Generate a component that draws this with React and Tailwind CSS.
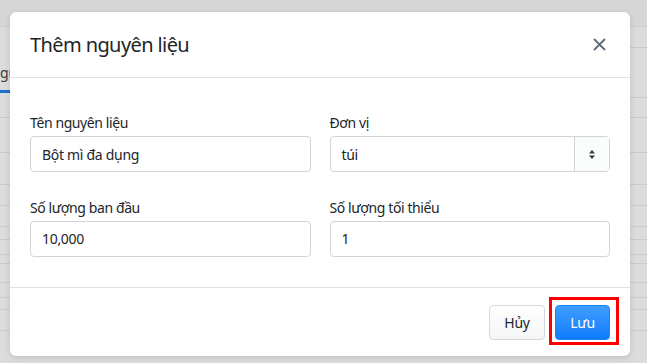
import React from "react";

const font = { fontFamily: '"Noto Sans", "Open Sans", Arial, sans-serif' };

function Field({ label, value, select }) {
  return (
    <div className="flex flex-col">
      <label className="mb-[3px] text-[14px] leading-[21px] tracking-[-0.4px] text-[#212529]">{label}</label>
      {select ? (
        <div className="flex h-[36px] rounded-[4px] border border-[#ced4da] bg-white">
          <div className="flex flex-1 items-center px-[11px] text-[14px] tracking-[-0.3px] text-[#212529]">{value}</div>
          <div className="flex w-[35px] items-center justify-center border-l border-[#ced4da] bg-[#fbfcfc]">
            <svg width="8" height="11" viewBox="0 0 8 11">
              <path d="M4 1 L7 4.5 H1 Z" fill="#343a40" />
              <path d="M4 10 L7 6.5 H1 Z" fill="#343a40" />
            </svg>
          </div>
        </div>
      ) : (
        <div className="flex h-[36px] items-center rounded-[4px] border border-[#ced4da] bg-white px-[11px] text-[14px] tracking-[-0.3px] text-[#212529]">
          {value}
        </div>
      )}
    </div>
  );
}

export default function App() {
  return (
    <div className="relative h-[363px] w-[647px] overflow-hidden bg-[#dcdcdc]" style={font}>
      {/* page behind the backdrop */}
      <div className="absolute inset-0">
        <div className="h-[27px] border-b border-[#cdcdcd] bg-[#d6d6d6]" />
        <div className="absolute left-0 top-[62px] text-[14px] text-[#3a3a3a]">gu</div>
        <div className="absolute left-0 top-[90px] h-[3px] w-[10px] bg-[#1e73d0]" />
        <div className="absolute left-0 top-[117px] h-px w-full bg-[#c9c9c9]" />
        <div className="absolute left-0 top-[152px] h-px w-full bg-[#c9c9c9]" />
        <div className="absolute right-0 top-[47px] h-px w-[20px] bg-[#c9c9c9]" />
        <div className="absolute right-0 top-[97px] h-px w-[20px] bg-[#c9c9c9]" />
        {[184, 205, 226, 239, 254, 263, 282, 297, 309, 330].map((y) => (
          <div key={y} className="absolute left-0 h-px w-full bg-[#cbcbcb]" style={{ top: y }} />
        ))}
      </div>

      {/* modal */}
      <div className="absolute left-[10px] top-[12px] flex h-[344px] w-[620px] flex-col rounded-[6px] bg-white shadow-[0_2px_6px_rgba(0,0,0,0.12)]">
        <div className="flex h-[66px] items-center justify-between border-b border-[#dee2e6] px-[20px]">
          <h5 className="text-[20px] leading-[24px] tracking-[-0.6px] text-[#212529]">Thêm nguyên liệu</h5>
          <svg width="13" height="13" viewBox="0 0 13 13" className="mr-[4px]">
            <path d="M1 1 L12 12 M12 1 L1 12" stroke="#5f6b78" strokeWidth="1.8" />
          </svg>
        </div>

        <div className="grid flex-1 grid-cols-2 gap-x-[19px] gap-y-[24px] px-[20px] pt-[34px] pb-[30px]">
          <Field label="Tên nguyên liệu" value="Bột mì đa dụng" />
          <Field label="Đơn vị" value="túi" select />
          <Field label="Số lượng ban đầu" value="10,000" />
          <Field label="Số lượng tối thiểu" value="1" />
        </div>

        <div className="flex h-[69px] items-center justify-end gap-[10px] border-t border-[#dee2e6] px-[20px]">
          <button className="h-[35px] w-[56px] rounded-[4px] border border-[#d5d9dd] bg-gradient-to-b from-white to-[#f5f6f7] text-[14px] tracking-[-0.3px] text-[#212529]">
            Hủy
          </button>
          <div className="relative">
            <button className="h-[35px] w-[55px] rounded-[4px] border border-[#1b84f5] bg-gradient-to-b from-[#3e9dff] to-[#0a7cfb] text-[14px] tracking-[-0.3px] text-white">
              Lưu
            </button>
            <div className="pointer-events-none absolute -left-[6px] -right-[9px] -top-[8px] -bottom-[5px] border-[3px] border-[#ff0000]" />
          </div>
        </div>
      </div>
    </div>
  );
}
